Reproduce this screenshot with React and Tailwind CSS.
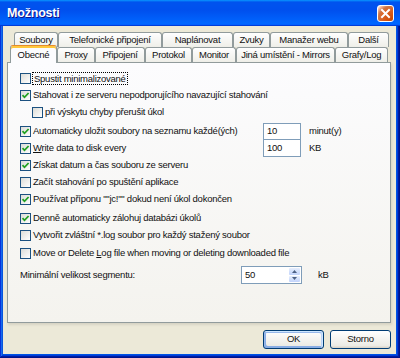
import React from 'react';

const Tab = ({ label, w, selected }) => {
  if (selected) {
    return (
      <div
        className={`${w} h-[18px] -mb-px relative z-10 flex items-start justify-center pt-[2px] border-x border-[#919b9c] border-t border-t-[#e68b2c] rounded-t-[3px] bg-[#fcfcfe] shadow-[inset_0_2px_#ffc83c]`}
      >
        {label}
      </div>
    );
  }
  return (
    <div
      className={`${w} h-[15px] flex items-center justify-center border-x border-t border-[#919b9c] rounded-t-[3px] bg-[linear-gradient(180deg,#fff,#fafaf9_26%,#f0f0ea_95%,#ecebe6)]`}
    >
      {label}
    </div>
  );
};

const Check = ({ checked }) => (
  <div className="w-[11px] h-[11px] shrink-0 border border-[#1c5180] bg-[linear-gradient(135deg,#dcdcd7,#fff)] flex items-center justify-center">
    {checked && (
      <svg width="9" height="9" viewBox="0 0 9 9">
        <path d="M1.5 4.2 L3.5 6.3 L7.6 2" fill="none" stroke="#21a121" strokeWidth="1.8" />
      </svg>
    )}
  </div>
);

const Row = ({ checked, children, className = '', labelW = '' }) => (
  <div className={`h-[17px] flex items-center ${className}`}>
    <div className={`flex items-center gap-[2px] ${labelW}`}>
      <Check checked={checked} />
      <span className="whitespace-nowrap">{children}</span>
    </div>
  </div>
);

const Button = ({ children, def }) => (
  <div
    className={`w-[61px] h-[19px] flex items-center justify-center border border-[#003c74] rounded-[3px] bg-[linear-gradient(180deg,#fff,#ecebe5_86%,#d8d0c4)] ${
      def
        ? 'shadow-[inset_-1px_1px_#cee7ff,inset_1px_2px_#98b8ea,inset_-2px_2px_#bcd4f6,inset_1px_-1px_#89ade4,inset_2px_-2px_#89ade4]'
        : ''
    }`}
  >
    {children}
  </div>
);

export default function App() {
  return (
    <div className="w-[400px] h-[358px] flex flex-col bg-[#0054e3] shadow-[inset_-1px_-1px_#00138c,inset_1px_1px_#0831d9,inset_-2px_-2px_#001ea0,inset_2px_2px_#166aee,inset_-3px_-3px_#003bda,inset_3px_3px_#0855dd] font-['Liberation_Sans',Arial,sans-serif] text-[9.5px] tracking-[-0.25px] text-[#111]">
      {/* title bar */}
      <div className="h-[26px] shrink-0 flex items-center pl-[7px] pr-[6px] bg-[linear-gradient(180deg,#0997ff,#0053ee_8%,#0050ee_40%,#06f_88%,#06f_93%,#005bff_95%,#003dd7_96%,#003dd7)]">
        <span className="flex-1 text-white font-bold text-[12.5px] tracking-[-0.2px] [text-shadow:1px_1px_#0f1089]">
          Možnosti
        </span>
        <div className="w-[17px] h-[17px] mt-[1px] rounded-[3px] border border-white flex items-center justify-center bg-[radial-gradient(circle_at_90%_90%,#cc4600_0%,#dc6527_55%,#cd7546_70%,#ffccb2_90%,#fff_100%)]">
          <svg width="11" height="11" viewBox="0 0 11 11">
            <path d="M2 2 L9 9 M9 2 L2 9" stroke="#fff" strokeWidth="2" strokeLinecap="square" />
          </svg>
        </div>
      </div>

      {/* client area */}
      <div className="flex-1 ml-[3px] mr-[4px] mb-[4px] bg-[#ece9d8] flex flex-col pl-[4px] pr-[5px] pt-[6px]">
        <div className="flex h-[15px] ml-[7px]">
          <Tab label="Soubory" w="w-[44px]" />
          <Tab label="Telefonické připojení" w="w-[104px]" />
          <Tab label="Naplánovat" w="w-[71px]" />
          <Tab label="Zvuky" w="w-[37px]" />
          <Tab label="Manažer webu" w="w-[78px]" />
          <Tab label="Další" w="w-[41px]" />
        </div>
        <div className="flex items-end h-[15px] ml-[3px]">
          <Tab label="Obecné" w="w-[47px]" selected />
          <Tab label="Proxy" w="w-[38px]" />
          <Tab label="Připojení" w="w-[50px]" />
          <Tab label="Protokol" w="w-[47px]" />
          <Tab label="Monitor" w="w-[44px]" />
          <Tab label="Jiná umístění - Mirrors" w="w-[99px]" />
          <Tab label="Grafy/Log" w="w-[53px]" />
        </div>

        {/* panel */}
        <div className="h-[261px] border border-[#919b9c] bg-[linear-gradient(180deg,#fcfcfe,#f4f3ee)] shadow-[1px_2px_2px_0_rgba(208,206,191,0.75)] pl-[12px] pt-[7px]">
          <div className="h-[17px] flex items-center gap-[1px]">
            <Check />
            <span className="border border-dotted border-black px-[1px] leading-[11px] whitespace-nowrap">
              Spustit minimalizované
            </span>
          </div>
          <Row checked>Stahovat i ze serveru nepodporujícího navazující stahování</Row>
          <Row className="pl-[12px]">při výskytu chyby přerušit úkol</Row>

          <div className="h-[17px] mt-[2px] flex items-center">
            <div className="w-[243px] flex items-center gap-[2px]">
              <Check checked />
              <span className="whitespace-nowrap">Automaticky uložit soubory na seznamu každé(ých)</span>
            </div>
            <div className="w-[38px] h-[17px] border border-[#7f9db9] bg-white flex items-center pl-[3px]">10</div>
            <span className="ml-[8px]">minut(y)</span>
          </div>
          <div className="h-[17px] flex items-center">
            <div className="w-[243px] flex items-center gap-[2px]">
              <Check checked />
              <span className="whitespace-nowrap">
                <span className="underline">W</span>rite data to disk every
              </span>
            </div>
            <div className="w-[38px] h-[17px] border border-t-0 border-[#7f9db9] bg-white flex items-center pl-[3px]">100</div>
            <span className="ml-[8px]">KB</span>
          </div>

          <Row checked>Získat datum a čas souboru ze serveru</Row>
          <Row>Začít stahování po spuštění aplikace</Row>
          <Row checked>Používat příponu ""jc!"" dokud není úkol dokončen</Row>
          <Row checked className="mt-[2px]">Denně automaticky zálohuj databázi úkolů</Row>
          <Row>Vytvořit zvláštní *.log soubor pro každý stažený soubor</Row>
          <Row className="mt-[1px]">
            Move or Delete <span className="underline">L</span>og file when moving or deleting downloaded file
          </Row>

          <div className="h-[18px] mt-[4px] flex items-center">
            <span className="w-[221px] whitespace-nowrap">Minimální velikost segmentu:</span>
            <div className="w-[61px] h-[18px] border border-[#7f9db9] bg-white flex items-center">
              <span className="flex-1 pl-[3px]">50</span>
              <div className="w-[13px] h-full flex flex-col gap-px p-px">
                <div className="flex-1 rounded-[1px] bg-[linear-gradient(180deg,#e6eefc,#c1d3fb)] flex items-center justify-center">
                  <svg width="5" height="3" viewBox="0 0 5 3">
                    <path d="M0 3 L2.5 0 L5 3 Z" fill="#4d6185" />
                  </svg>
                </div>
                <div className="flex-1 rounded-[1px] bg-[linear-gradient(180deg,#e6eefc,#c1d3fb)] flex items-center justify-center">
                  <svg width="5" height="3" viewBox="0 0 5 3">
                    <path d="M0 0 L2.5 3 L5 0 Z" fill="#4d6185" />
                  </svg>
                </div>
              </div>
            </div>
            <span className="ml-[16px]">kB</span>
          </div>
        </div>

        {/* buttons */}
        <div className="flex justify-end gap-[6px] mt-[7px]">
          <Button def>OK</Button>
          <Button>Storno</Button>
        </div>
      </div>
    </div>
  );
}
